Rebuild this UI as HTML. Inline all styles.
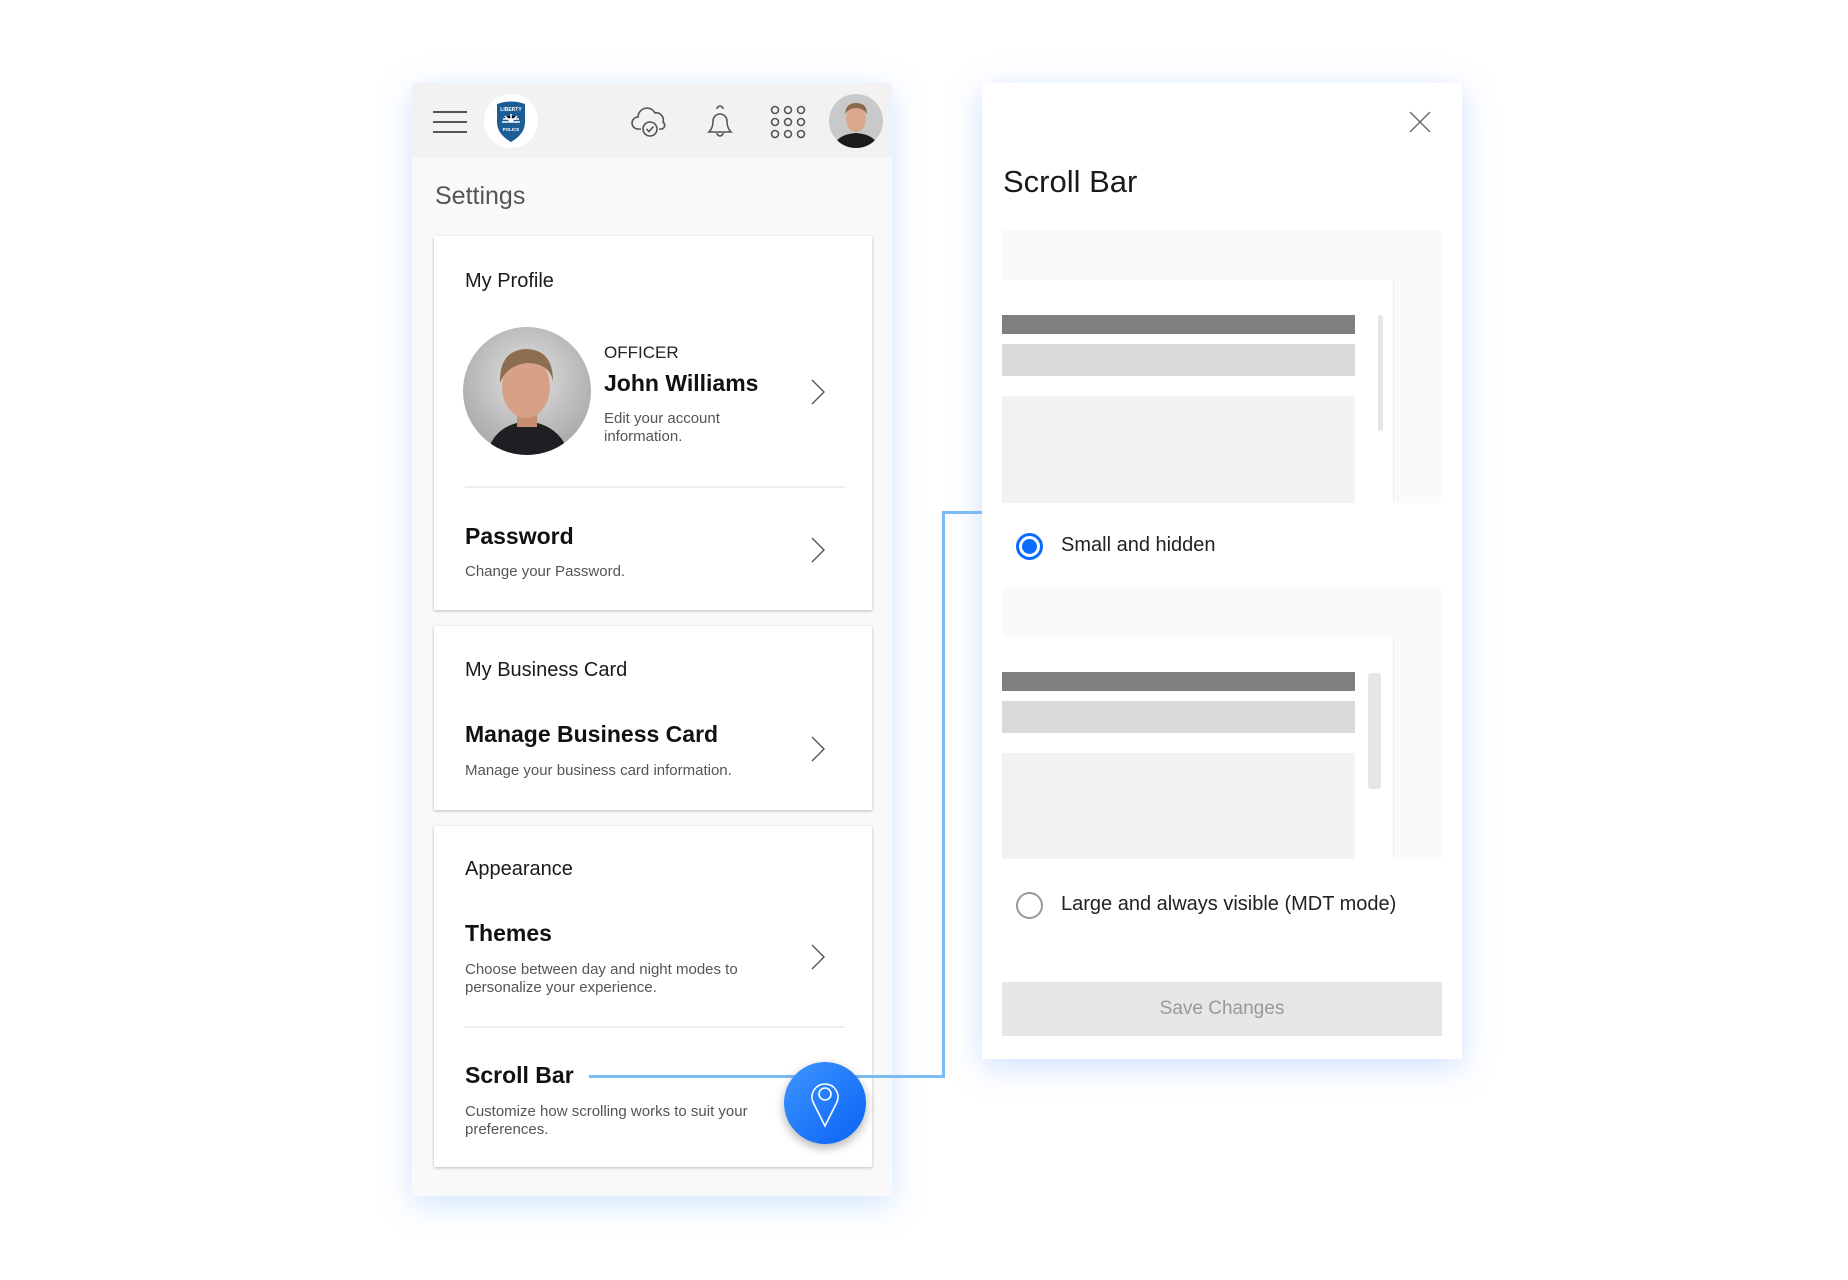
<!DOCTYPE html>
<html><head><meta charset="utf-8"><style>
*{margin:0;padding:0;box-sizing:border-box}
body{width:1848px;height:1280px;background:#fff;position:relative;overflow:hidden;font-family:"Liberation Sans",Roboto,sans-serif;color:#1a1a1a}
.a{position:absolute}
.panel{left:412px;top:83px;width:480px;height:1113px;background:#f9f9f9;box-shadow:0 8px 30px rgba(120,180,255,.35)}
.hdr{left:412px;top:83px;width:480px;height:75px;background:#f2f2f2}
.card{background:#fff;box-shadow:0 1px 3px rgba(0,0,0,.25);left:434px;width:438px}
.h3{font-size:20px;color:#1a1a1a}
.h2{font-size:23px;font-weight:bold;color:#111}
.sub{font-size:15px;color:#555;line-height:18px}
.chev{width:16px;height:26px}
.div{height:2px;background:#eee;left:465px;width:380px}
.rp{left:982px;top:83px;width:480px;height:976px;background:#fff;box-shadow:0 8px 30px rgba(120,170,255,.35)}
.line{background:#7cbcf5}
</style></head><body>
<div class="a panel"></div>
<div class="a hdr"></div>
<div class="a" style="left:433px;top:111px;width:34px;height:2px;background:#555"></div>
<div class="a" style="left:433px;top:121px;width:34px;height:2px;background:#555"></div>
<div class="a" style="left:433px;top:131px;width:34px;height:2px;background:#555"></div>
<div class="a" style="left:484px;top:94px;width:54px;height:54px;border-radius:50%;background:#fff"></div>
<svg class="a" style="left:492px;top:100px" width="38" height="44" viewBox="0 0 38 44"><path d="M5 4 Q19 -1 33 4 L33 22 Q33 34 19 42 Q5 34 5 22 Z" fill="#1d5d95"/><text x="19" y="11" font-size="5" fill="#fff" text-anchor="middle" font-family="Liberation Sans" font-weight="bold">LIBERTY</text><path d="M10 22 L28 22 M19 14 L19 22 M13 16 L19 22 L25 16 M11 19 L27 19" stroke="#fff" stroke-width="1.5"/><text x="19" y="31" font-size="4.5" fill="#fff" text-anchor="middle" font-family="Liberation Sans" font-weight="bold">POLICE</text></svg>
<svg class="a" style="left:630px;top:104px" width="40" height="36" viewBox="0 0 40 36" fill="none" stroke="#555" stroke-width="1.6"><path d="M11 25 H8 a6 6 0 0 1 0-12 a9 9 0 0 1 17-4 a7 7 0 0 1 8 9 a4 4 0 0 1 -1 7 h-3"/><circle cx="20" cy="25" r="7"/><path d="M16.5 25 l2.5 2.5 l4.5-5"/></svg>
<svg class="a" style="left:704px;top:104px" width="32" height="36" viewBox="0 0 32 36" fill="none" stroke="#555" stroke-width="1.6"><path d="M13 5 a3 3 0 0 1 6 0 M5 28 Q9 24 9 17 a7 7 0 0 1 14 0 Q23 24 27 28 Z M13 29 a3 3 0 0 0 6 0"/></svg>
<svg class="a" style="left:768px;top:104px" width="40" height="36" viewBox="0 0 40 36" fill="none" stroke="#555" stroke-width="1.6"><circle cx="7" cy="6" r="3.5"/><circle cx="20" cy="6" r="3.5"/><circle cx="33" cy="6" r="3.5"/><circle cx="7" cy="18" r="3.5"/><circle cx="20" cy="18" r="3.5"/><circle cx="33" cy="18" r="3.5"/><circle cx="7" cy="30" r="3.5"/><circle cx="20" cy="30" r="3.5"/><circle cx="33" cy="30" r="3.5"/></svg>
<svg class="a" style="left:829px;top:94px" width="54" height="54" viewBox="0 0 54 54"><defs><clipPath id="c1"><circle cx="27" cy="27" r="27"/></clipPath></defs><g clip-path="url(#c1)"><rect width="54" height="54" fill="#c9c9c9"/><ellipse cx="27" cy="25" rx="10" ry="13" fill="#d9a88c"/><path d="M16 20 Q17 9 27 9 Q38 9 38 20 Q34 14 27 14 Q20 14 16 20Z" fill="#8a6a4a"/><path d="M4 54 Q8 40 27 39 Q46 40 50 54Z" fill="#1c1c1e"/></g></svg>

<div class="a" style="left:435px;top:182px;font-size:25px;color:#555">Settings</div>

<div class="a card" style="top:236px;height:374px"></div>
<div class="a h3" style="left:465px;top:270px">My Profile</div>
<svg class="a" style="left:463px;top:327px" width="128" height="128" viewBox="0 0 128 128"><defs><clipPath id="c2"><circle cx="64" cy="64" r="64"/></clipPath><radialGradient id="g" cx=".5" cy=".4" r=".6"><stop offset="0" stop-color="#e2e2e2"/><stop offset="1" stop-color="#a9a9a9"/></radialGradient></defs><g clip-path="url(#c2)"><rect width="128" height="128" fill="url(#g)"/><path d="M24 128 Q30 98 64 94 Q98 98 106 128Z" fill="#1d1f22"/><rect x="54" y="80" width="20" height="20" fill="#c58e72"/><ellipse cx="63" cy="60" rx="24" ry="31" fill="#d8a187"/><path d="M37 56 Q36 24 62 22 Q90 22 90 54 Q86 36 64 36 Q44 38 37 56Z" fill="#8d6d4f"/></g></svg>
<div class="a" style="left:604px;top:343px;font-size:17px;color:#222">OFFICER</div>
<div class="a h2" style="left:604px;top:370px">John Williams</div>
<div class="a sub" style="left:604px;top:410px">Edit your account<br>information.</div>
<svg class="a chev" style="left:810px;top:379px" viewBox="0 0 16 26"><path d="M2 1 L14 13 L2 25" fill="none" stroke="#555" stroke-width="1.4"/></svg>
<div class="a div" style="top:486px"></div>
<div class="a h2" style="left:465px;top:523px">Password</div>
<div class="a sub" style="left:465px;top:563px">Change your Password.</div>
<svg class="a chev" style="left:810px;top:537px" viewBox="0 0 16 26"><path d="M2 1 L14 13 L2 25" fill="none" stroke="#555" stroke-width="1.4"/></svg>

<div class="a card" style="top:626px;height:184px"></div>
<div class="a h3" style="left:465px;top:659px">My Business Card</div>
<div class="a h2" style="left:465px;top:721px">Manage Business Card</div>
<div class="a sub" style="left:465px;top:762px">Manage your business card information.</div>
<svg class="a chev" style="left:810px;top:736px" viewBox="0 0 16 26"><path d="M2 1 L14 13 L2 25" fill="none" stroke="#555" stroke-width="1.4"/></svg>

<div class="a card" style="top:826px;height:341px"></div>
<div class="a h3" style="left:465px;top:858px">Appearance</div>
<div class="a h2" style="left:465px;top:920px">Themes</div>
<div class="a sub" style="left:465px;top:961px">Choose between day and night modes to<br>personalize your experience.</div>
<svg class="a chev" style="left:810px;top:944px" viewBox="0 0 16 26"><path d="M2 1 L14 13 L2 25" fill="none" stroke="#555" stroke-width="1.4"/></svg>
<div class="a div" style="top:1026px"></div>
<div class="a h2" style="left:465px;top:1062px">Scroll Bar</div>
<div class="a sub" style="left:465px;top:1103px">Customize how scrolling works to suit your<br>preferences.</div>

<div class="a line" style="left:589px;top:1075px;width:356px;height:3px"></div>
<div class="a line" style="left:942px;top:511px;width:3px;height:567px"></div>
<div class="a line" style="left:942px;top:511px;width:45px;height:3px"></div>

<div class="a" style="left:784px;top:1062px;width:82px;height:82px;border-radius:50%;background:linear-gradient(135deg,#3d95ff,#0a62f5);box-shadow:0 4px 10px rgba(0,0,0,.3)"></div>
<svg class="a" style="left:805px;top:1074px" width="40" height="56" viewBox="0 0 40 56" fill="none" stroke="#fff" stroke-width="1.6"><path d="M20 52 L8 28 A13 13 0 1 1 32 28 Z"/><circle cx="20" cy="20" r="6"/></svg>

<div class="a rp"></div>
<svg class="a" style="left:1409px;top:111px" width="22" height="22" viewBox="0 0 22 22"><path d="M1 1 L21 21 M21 1 L1 21" stroke="#666" stroke-width="1.4"/></svg>
<div class="a" style="left:1003px;top:164px;font-size:31px;color:#1a1a1a">Scroll Bar</div>

<div class="a" style="left:1002px;top:230px;width:439px;height:273px;background:#fafafa"></div>
<div class="a" style="left:1002px;top:280px;width:392px;height:223px;background:#fff;border-right:1px solid #eee"></div>
<div class="a" style="left:1002px;top:315px;width:353px;height:19px;background:#808080"></div>
<div class="a" style="left:1002px;top:344px;width:353px;height:32px;background:#d9d9d9"></div>
<div class="a" style="left:1002px;top:396px;width:353px;height:107px;background:#f2f2f2"></div>
<div class="a" style="left:1378px;top:315px;width:5px;height:116px;background:#e6e6e6;border-radius:3px"></div>
<div class="a" style="left:1016px;top:533px;width:27px;height:27px;border-radius:50%;border:3px solid #0a6cff;background:#fff"></div>
<div class="a" style="left:1022px;top:539px;width:15px;height:15px;border-radius:50%;background:#0a6cff"></div>
<div class="a" style="left:1061px;top:534px;font-size:20px;color:#222">Small and hidden</div>

<div class="a" style="left:1002px;top:587px;width:439px;height:272px;background:#fafafa"></div>
<div class="a" style="left:1002px;top:637px;width:392px;height:222px;background:#fff;border-right:1px solid #eee"></div>
<div class="a" style="left:1002px;top:672px;width:353px;height:19px;background:#808080"></div>
<div class="a" style="left:1002px;top:701px;width:353px;height:32px;background:#d9d9d9"></div>
<div class="a" style="left:1002px;top:753px;width:353px;height:106px;background:#f2f2f2"></div>
<div class="a" style="left:1368px;top:673px;width:13px;height:116px;background:#e6e6e6;border-radius:3px"></div>
<div class="a" style="left:1016px;top:892px;width:27px;height:27px;border-radius:50%;border:2px solid #999;background:#fff"></div>
<div class="a" style="left:1061px;top:893px;font-size:20px;color:#222">Large and always visible (MDT mode)</div>

<div class="a" style="left:1002px;top:982px;width:440px;height:54px;background:#e6e6e6;color:#999;font-size:19px;text-align:center;line-height:54px">Save Changes</div>
</body></html>
